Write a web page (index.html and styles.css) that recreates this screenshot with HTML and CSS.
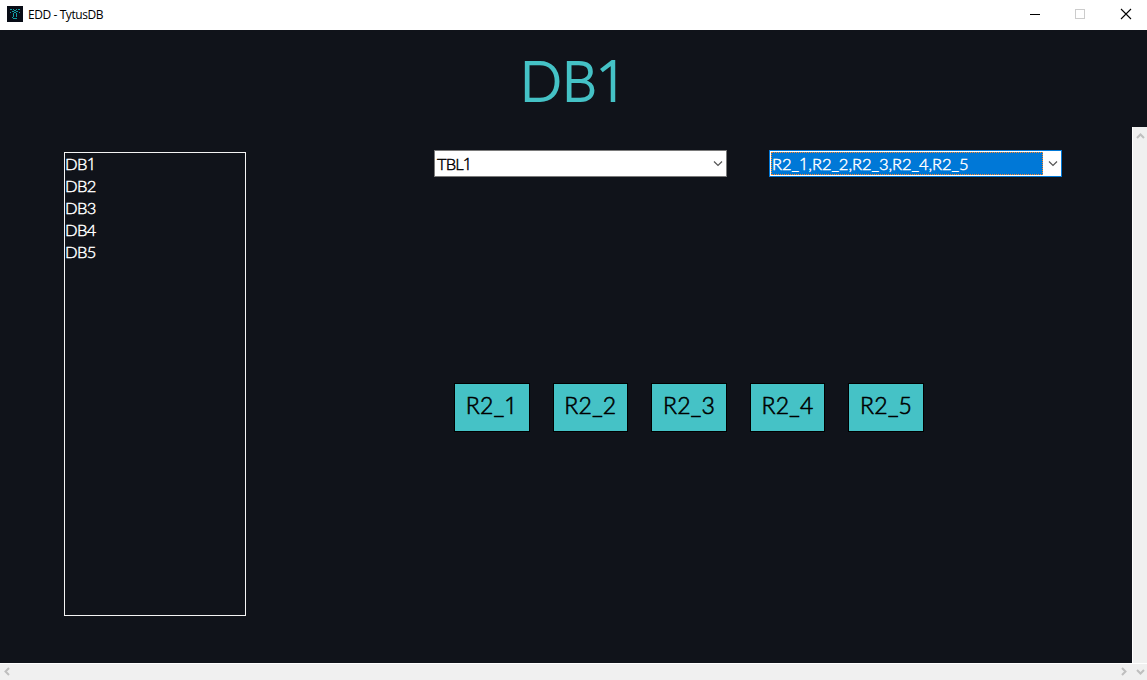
FILE: index.html
```html
<!DOCTYPE html>
<html lang="es">
<head>
<meta charset="utf-8">
<title>EDD - TytusDB</title>
<link rel="stylesheet" href="styles.css">
</head>
<body>
<div class="window">
  <header class="titlebar">
    <svg class="logo" width="16" height="16" viewBox="0 0 16 16" shape-rendering="crispEdges">
      <rect width="16" height="16" fill="#080c16"/>
      <path fill="#129da4" d="M3 3h2v1H3zM6 3h1v1H6zM9 3h1v1H9zM11 3h2v1h-2zM5 5h2v1H5zM7 4h2v1H7zM9 5h2v1H9zM3 6h1v1H3zM12 6h1v1h-1zM6 7h1v4H6zM9 7h1v4H9zM7 6h2v1H7zM5 11h1v1H5zM6 12h4v1H6z"/>
    </svg>
    <span class="caption">EDD - TytusDB</span>
    <svg class="controls" width="137" height="30" viewBox="0 0 137 30" fill="none">
      <path d="M20 14.5h10" stroke="#000"/>
      <rect x="65.5" y="9.5" width="9" height="9" stroke="#ccc"/>
      <path d="M111 9l10 10M121 9l-10 10" stroke="#000" stroke-width="1.1"/>
    </svg>
  </header>
  <h1 class="heading"><span class="h-d">D</span><span class="h-b">B</span><span class="one">1</span></h1>
  <div class="middle">
    <main class="content">
      <ul class="databases"><li>DB<span class="one">1</span></li><li>DB2</li><li>DB3</li><li>DB4</li><li>DB5</li></ul>
      <section class="viewer">
        <div class="selectors">
          <div class="combo">
            <span class="value table-name">TBL<span class="one">1</span></span>
            <svg class="arrow" width="17" height="25" viewBox="0 0 17 25"><path d="M5 10.5l4 4 4-4" fill="none" stroke="#555" stroke-width="1.2"/></svg>
          </div>
          <div class="combo focused">
            <span class="value">R2_<span class="one">1</span>,R2_2,R2_3,R2_4,R2_5</span>
            <svg class="arrow" width="18" height="25" viewBox="0 0 18 25"><path d="M6 10.5l4 4 4-4" fill="none" stroke="#555" stroke-width="1.2"/></svg>
          </div>
        </div>
        <div class="nodes">
          <div class="node">R2_<span class="one">1</span></div><div class="node">R2_2</div><div class="node">R2_3</div><div class="node">R2_4</div><div class="node">R2_5</div>
        </div>
      </section>
    </main>
    <div class="vscroll">
      <svg width="14" height="16" viewBox="0 0 14 16"><path d="M4 11l3.500-3.500L11 11" class="chevron"/></svg>
    </div>
  </div>
  <footer class="hscroll">
    <svg width="16" height="16" viewBox="0 0 16 16"><path d="M9 4L5.500 7.500 9 11" class="chevron"/></svg>
    <svg class="right" width="16" height="16" viewBox="0 0 16 16"><path d="M6 4l3.500 3.500L6 11" class="chevron"/></svg>
    <svg width="15" height="16" viewBox="0 0 15 16"><path d="M5 6l3.500 3.500L12 6" class="chevron"/></svg>
  </footer>
</div>
</body>
</html>
```
FILE: styles.css
```css
* { box-sizing: border-box; }
body { margin: 0; overflow: hidden; }
svg { display: block; flex: none; }
.window {
  display: flex; flex-direction: column; width: 1147px; height: 680px;
  background: #10131a; font-family: "Lato", "Liberation Sans", sans-serif;
}
.titlebar { display: flex; align-items: center; height: 30px; background: #fff; padding-left: 7px; flex: none; }
.logo { margin-top: -2px; }
.caption { font: 12px/16px "Open Sans", sans-serif; letter-spacing: -.42px; color: #000; margin-left: 5px; white-space: nowrap; }
.controls { margin-left: auto; }
.one { font-family: "Open Sans", sans-serif; line-height: 1; }
.heading {
  height: 97px; margin: 0; padding: 16px 0 0 520px; display: flex; align-items: baseline; flex: none;
  font-size: 55px; line-height: 68px; font-weight: 300; color: #45c2c6;
  -webkit-text-stroke: 1.8px #45c2c6;
}
.h-d { width: 42px; }
.h-b { width: 34px; }
.middle { display: flex; flex: 1; min-height: 0; }
.content { display: flex; flex: 1; padding: 23px 0 0 64px; }
.databases {
  width: 182px; height: 464px; margin: 2px 0 0; padding: 0; list-style: none;
  border: 1px solid #f4f4f4; color: #fff; font-size: 16.500px; line-height: 22px; letter-spacing: -.6px;
  font-weight: 300; -webkit-text-stroke: .45px;
}
.databases li { height: 22px; }
.viewer { margin-left: 188px; }
.selectors { display: flex; gap: 42px; }
.combo {
  display: flex; width: 293px; height: 27px; background: #fff; border: 1px solid #7a7a7a;
  color: #000; font-size: 16.500px; line-height: 27px; white-space: nowrap;
  font-weight: 300; -webkit-text-stroke: .45px;
}
.value { flex: 1; padding-left: 2px; }
.table-name { letter-spacing: -.9px; }
.focused { border-color: #0078d7; }
.focused .value {
  margin: 1px 0 1px 1px; padding-left: 0; background: #0078d7; color: #fff;
  border: 1px dotted #ff8728; line-height: 23px; letter-spacing: -.03px;
}
.nodes { display: flex; gap: 23px; margin: 206px 0 0 20px; }
.node {
  width: 75.600px; height: 49px; border: 1px solid #000; background: #45c2c6; color: #000;
  font-size: 23px; line-height: 42px; text-align: center;
  font-weight: 300; -webkit-text-stroke: .6px; letter-spacing: .3px;
}
.vscroll { width: 15px; background: #f0f0f0; border-left: 1px solid #fff; }
.hscroll { display: flex; flex: none; height: 17px; background: #f0f0f0; border-top: 1px solid #fff; }
.right { margin-left: auto; }
.chevron { fill: none; stroke: #bfbfbf; stroke-width: 2; }
```
